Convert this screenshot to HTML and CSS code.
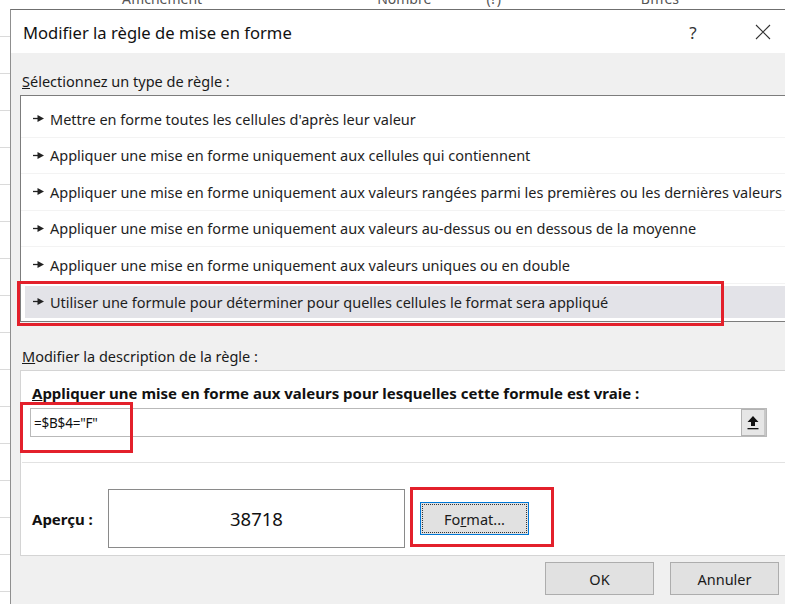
FILE: index.html
```html
<!DOCTYPE html>
<html lang="fr">
<head>
<meta charset="utf-8">
<title>Modifier la règle de mise en forme</title>
<link rel="stylesheet" href="styles.css">
</head>
<body>
<div class="sheet-head">
  <span class="col c1">Affichement</span>
  <span class="col c2">Nombre</span>
  <span class="col c3">(?)</span>
  <span class="col c4">Bfffes</span>
</div>

<div class="dialog">
  <div class="titlebar">
    <div class="title">Modifier la règle de mise en forme</div>
    <div class="tb-btn">?</div>
    <div class="tb-btn">
      <svg width="16" height="16" viewBox="0 0 16 16"><path d="M1 1 L15 15 M15 1 L1 15" stroke="#333" stroke-width="1.1" fill="none"/></svg>
    </div>
  </div>

  <div class="content">
    <div class="label"><u>S</u>électionnez un type de règle :</div>

    <div class="list">
      <div class="row"><svg class="arrow" width="11" height="9" viewBox="0 0 11 9"><path d="M0 4.5 H6" stroke="#222" stroke-width="1.3"/><path d="M4.5 1 L11 4.5 L4.5 8 Z" fill="#222"/></svg>Mettre en forme toutes les cellules d'après leur valeur</div>
      <div class="row"><svg class="arrow" width="11" height="9" viewBox="0 0 11 9"><path d="M0 4.5 H6" stroke="#222" stroke-width="1.3"/><path d="M4.5 1 L11 4.5 L4.5 8 Z" fill="#222"/></svg>Appliquer une mise en forme uniquement aux cellules qui contiennent</div>
      <div class="row"><svg class="arrow" width="11" height="9" viewBox="0 0 11 9"><path d="M0 4.5 H6" stroke="#222" stroke-width="1.3"/><path d="M4.5 1 L11 4.5 L4.5 8 Z" fill="#222"/></svg>Appliquer une mise en forme uniquement aux valeurs rangées parmi les premières ou les dernières valeurs</div>
      <div class="row"><svg class="arrow" width="11" height="9" viewBox="0 0 11 9"><path d="M0 4.5 H6" stroke="#222" stroke-width="1.3"/><path d="M4.5 1 L11 4.5 L4.5 8 Z" fill="#222"/></svg>Appliquer une mise en forme uniquement aux valeurs au-dessus ou en dessous de la moyenne</div>
      <div class="row"><svg class="arrow" width="11" height="9" viewBox="0 0 11 9"><path d="M0 4.5 H6" stroke="#222" stroke-width="1.3"/><path d="M4.5 1 L11 4.5 L4.5 8 Z" fill="#222"/></svg>Appliquer une mise en forme uniquement aux valeurs uniques ou en double</div>
      <div class="row sel"><svg class="arrow" width="11" height="9" viewBox="0 0 11 9"><path d="M0 4.5 H6" stroke="#222" stroke-width="1.3"/><path d="M4.5 1 L11 4.5 L4.5 8 Z" fill="#222"/></svg>Utiliser une formule pour déterminer pour quelles cellules le format sera appliqué</div>
      <div class="mark mark-rule"></div>
    </div>

    <div class="label label-desc"><u>M</u>odifier la description de la règle :</div>

    <div class="panel">
      <div class="bold-label"><u>A</u>ppliquer une mise en forme aux valeurs pour lesquelles cette formule est vraie :</div>
      <div class="formula">
        <div class="formula-text">=$B$4="F"</div>
        <div class="ref-btn">
          <svg width="12" height="14" viewBox="0 0 12 14"><path d="M6 0 L11.5 6 H8 V10 H4 V6 H0.5 Z" fill="#111"/><rect x="0.5" y="12" width="11" height="1.3" fill="#111"/></svg>
        </div>
      </div>
      <div class="sep"></div>
      <div class="preview-row">
        <div class="bold-label preview-label">Aperçu :</div>
        <div class="preview">38718</div>
        <div class="btn btn-format"><span>Fo<u>r</u>mat...</span></div>
      </div>
      <div class="mark mark-formula"></div>
      <div class="mark mark-format"></div>
    </div>

    <div class="actions">
      <div class="btn btn-action">OK</div>
      <div class="btn btn-action">Annuler</div>
    </div>
  </div>
</div>
</body>
</html>
```

FILE: styles.css
```css
* { box-sizing: border-box; }

html, body {
  margin: 0;
  padding: 0;
}

body {
  width: 785px;
  height: 604px;
  overflow: hidden;
  background-color: #fff;
  background-image: repeating-linear-gradient(to bottom, transparent 0 36px, #dadada 36px 37px);
  font-family: "Noto Sans", "Open Sans", sans-serif;
  color: #1a1a1a;
}

/* spreadsheet header peeking above the dialog */
.sheet-head {
  height: 9px;
  overflow: hidden;
  background: #fff;
  font-size: 14px;
  color: #555;
  white-space: nowrap;
  display: flex;
}
.sheet-head .col { display: block; margin-top: -11px; }
.sheet-head .c1 { margin-left: 122px; }
.sheet-head .c2 { margin-left: 175px; }
.sheet-head .c3 { margin-left: 55px; }
.sheet-head .c4 { margin-left: 140px; }

.dialog {
  margin-left: 10px;
  width: 801px;
  height: 620px;
  border-left: 1px solid #8f8f8f;
  border-top: 1px solid #6f6f6f;
  background: #f0f0f0;
}

.titlebar {
  height: 43px;
  background: #fff;
  display: grid;
  grid-template-columns: 1fr 46px 46px;
  column-gap: 24px;
  align-items: center;
  padding-left: 12px;
  padding-right: 25px;
  padding-top: 1px;
}
.title {
  font-size: 16.6px;
  color: #111;
}
.tb-btn {
  display: flex;
  justify-content: center;
  align-items: center;
  font-size: 17px;
  color: #333;
}

.content {
  padding: 18px 0 0 9px;
}

.label {
  font-size: 14.5px;
  line-height: 20px;
  height: 20px;
  padding-left: 2px;
  color: #1a1a1a;
  margin-bottom: 4px;
}
.label-desc {
  margin-top: 24px;
  margin-bottom: 4px;
}

.list {
  position: relative;
  width: 790px;
  height: 227px;
  background: #fff;
  border: 1px solid #7c7c7c;
  padding-top: 5px;
}

.row {
  height: 36.5px;
  display: flex;
  align-items: center;
  padding-left: 12px;
  font-size: 14.5px;
  white-space: nowrap;
  border-bottom: 1px solid #f3f3f3;
  color: #1e1e1e;
}
.row .arrow {
  flex: none;
  margin-right: 6px;
}
.row.sel {
  margin-left: 4px;
  padding-left: 8px;
  background: #e3e3e8;
  border-top: 2px solid #fff;
  border-bottom: 2px solid #fff;
}

/* red highlight frames */
.mark {
  position: absolute;
  border: 3px solid #e3202b;
  pointer-events: none;
}
.mark-rule { left: -4px; top: 185px; width: 707px; height: 45px; }
.mark-formula { left: -1px; top: 31px; width: 113px; height: 51px; }
.mark-format { left: 389px; top: 116px; width: 144px; height: 60px; }

.panel {
  position: relative;
  width: 790px;
  height: 186px;
  background: #fff;
  border: 1px solid #d4d4d4;
  padding: 12px 0 0 9px;
}

.bold-label {
  font-size: 15px;
  font-weight: 700;
  line-height: 20px;
  height: 20px;
  padding-left: 2px;
  color: #111;
  white-space: nowrap;
}

.formula {
  margin-top: 5px;
  width: 737px;
  height: 29px;
  border: 1px solid #b9b9b9;
  display: flex;
  align-items: center;
}
.formula-text {
  flex: 1;
  padding-left: 3px;
  font-size: 13.5px;
  letter-spacing: -0.2px;
  color: #111;
}
.ref-btn {
  width: 25px;
  height: 27px;
  background: #e6e6e6;
  border: 1px solid #b3b3b3;
  border-right: 2px solid #c8c8c8;
  display: flex;
  justify-content: center;
  align-items: center;
}

.sep {
  margin: 25px 0 0 -8px;
  height: 1px;
  background: #e2e2e2;
}

.preview-row {
  margin-top: 26px;
  display: flex;
  align-items: center;
}
.preview-label {
  width: 78px;
}
.preview {
  width: 297px;
  height: 59px;
  border: 1px solid #8a8a8a;
  display: flex;
  justify-content: center;
  align-items: center;
  font-size: 18.5px;
  color: #111;
}

.btn {
  width: 109px;
  height: 33px;
  background: #e1e1e1;
  border: 1px solid #adadad;
  display: flex;
  justify-content: center;
  align-items: center;
  font-size: 14.5px;
  color: #1a1a1a;
}
.btn-format {
  margin-left: 15px;
  border: 1px solid #0078d7;
  padding: 1px;
}
.btn-format span {
  width: 100%;
  height: 100%;
  display: flex;
  justify-content: center;
  align-items: center;
  outline: 1px dotted #333;
  outline-offset: -1px;
}

.actions {
  margin-top: 6px;
  width: 759px;
  display: flex;
  justify-content: flex-end;
  gap: 16px;
}
```
